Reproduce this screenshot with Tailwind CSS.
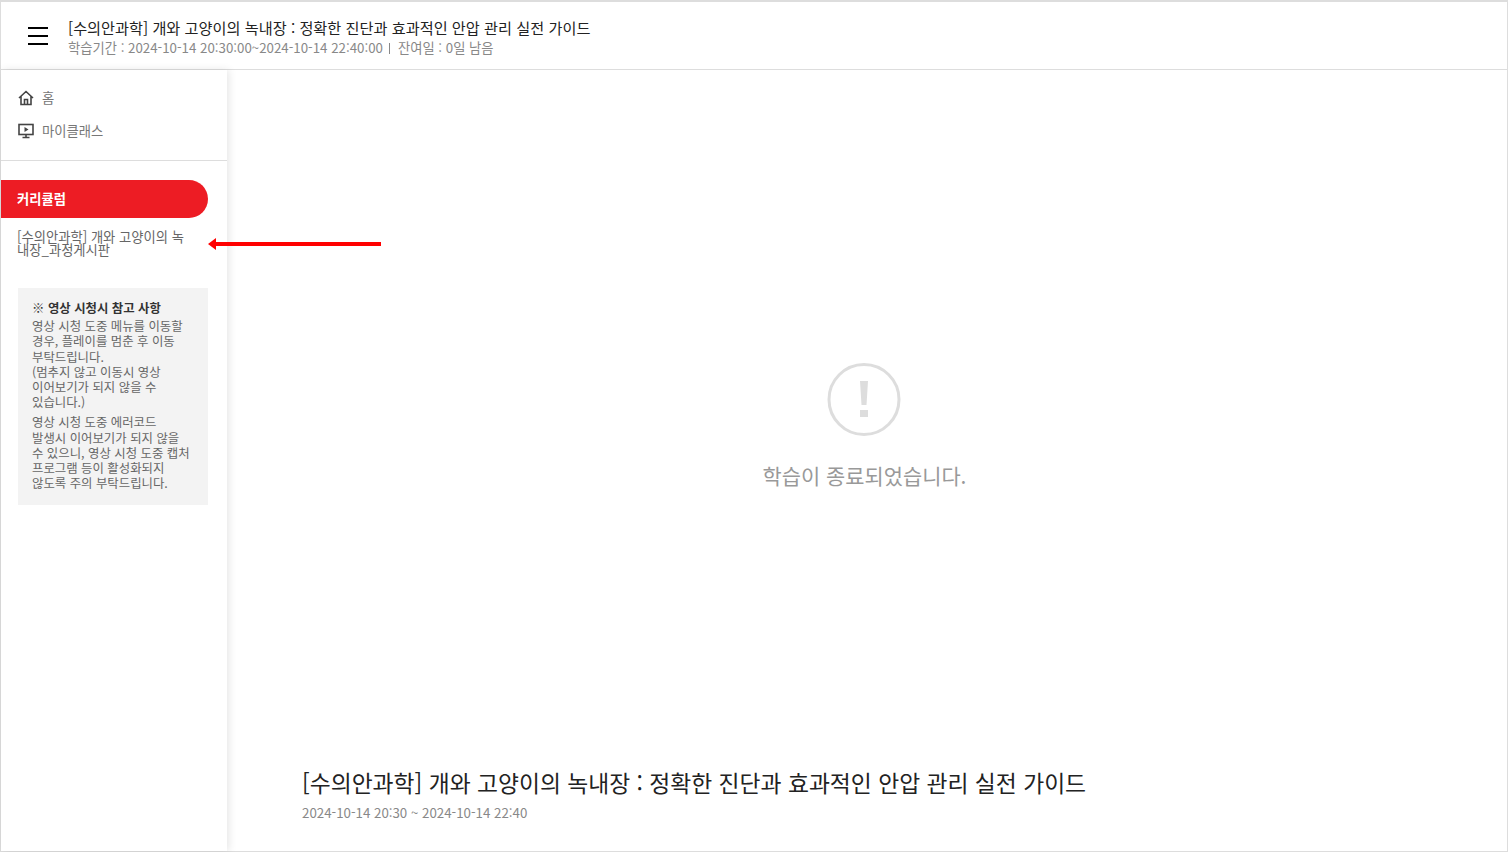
<!DOCTYPE html>
<html lang="ko">

<head>
  <meta charset="UTF-8">
  <title>수의안과학</title>
  <script src="https://cdn.jsdelivr.net/npm/@tailwindcss/browser@4"></script>
</head>

<body class="h-[852px] w-[1508px] overflow-hidden bg-white font-['Noto_Sans_CJK_KR','Noto_Sans',sans-serif] text-[#333]">
  <div class="relative flex h-full flex-col border-x border-b border-t-2 border-[#ddd]">

    <!-- Header -->
    <header class="flex h-[68px] shrink-0 items-center border-b border-[#ddd] pl-[27px]">
      <button class="flex w-5 flex-col gap-[6px]">
        <span class="h-[2px] w-5 bg-black"></span>
        <span class="h-[2px] w-5 bg-black"></span>
        <span class="h-[2px] w-5 bg-black"></span>
      </button>
      <div class="ml-[20px] pt-[3px]">
        <h1 class="text-[15.2px] leading-[20px] text-[#222]">[수의안과학] 개와 고양이의 녹내장 : 정확한 진단과 효과적인 안압 관리 실전 가이드</h1>
        <p class="mt-[2px] flex items-center text-[13.3px] leading-[18px] text-[#888]">
          <span>학습기간 : 2024-10-14 20:30:00~2024-10-14 22:40:00</span>
          <span class="ml-[6px] mr-[8px] h-[11px] w-px bg-[#888]"></span>
          <span>잔여일 : 0일 남음</span>
        </p>
      </div>
    </header>

    <div class="flex min-h-0 flex-1">
      <!-- Sidebar -->
      <aside class="w-[226px] shrink-0 shadow-[2px_0_8px_rgba(0,0,0,0.1)]">
        <nav class="flex h-[91px] flex-col gap-[13px] border-b border-[#ddd] pl-[17px] pt-[18px] text-[13.3px] leading-[20px] text-[#777]">
          <a class="flex items-center gap-[8px]">
            <svg class="h-[16px] w-[16px]" viewBox="0 0 16 16" fill="none" stroke="#444" stroke-width="1.6"><path d="M1 8 8 1.500 15 8M3 6.500V14.500H13V6.500M6.500 14.500V9.500H9.500V14.500"/></svg>
            <span>홈</span>
          </a>
          <a class="flex items-center gap-[8px]">
            <svg class="h-[16px] w-[16px]" viewBox="0 0 16 16" fill="none" stroke="#444" stroke-width="1.6"><rect x="1" y="1.500" width="14" height="10"/><path d="M8 11.500V14.500M4.500 14.500H11.500"/><path d="M6.500 4 10.500 6.500 6.500 9Z" fill="#444" stroke="none"/></svg>
            <span>마이클래스</span>
          </a>
        </nav>

        <div class="mt-[19px] flex h-[38px] w-[207px] items-center rounded-r-full bg-[#ed1c24] pb-[1px] pl-[16px] text-[13.3px] font-bold text-white">커리큘럼</div>

        <p class="ml-[16px] mt-[12px] w-[172px] text-[13.3px] leading-[13px] text-[#666]">[수의안과학] 개와 고양이의 녹내장_과정게시판</p>

        <div class="ml-[17px] mt-[32px] w-[190px] break-keep bg-[#f3f3f3] pb-[14px] pl-[14px] pr-[16px] pt-[13px] text-[12.4px] leading-[15.2px] text-[#666]">
          <p class="mb-[3px] text-[#333]">※ <b>영상 시청시 참고 사항</b></p>
          <p>영상 시청 도중 메뉴를 이동할 경우, 플레이를 멈춘 후 이동 부탁드립니다.<br>(멈추지 않고 이동시 영상 이어보기가 되지 않을 수 있습니다.)</p>
          <p class="mt-[5px]">영상 시청 도중 에러코드 발생시 이어보기가 되지 않을 수 있으니, 영상 시청 도중 캡처 프로그램 등이 활성화되지 않도록 주의 부탁드립니다.</p>
        </div>
      </aside>

      <!-- Main -->
      <main class="flex min-w-0 flex-1 flex-col">
        <div class="flex flex-1 flex-col items-center pr-[5px] pt-[293px]">
          <svg class="mr-[1px] h-[74px] w-[74px]" viewBox="0 0 74 74" fill="none">
            <circle cx="37" cy="36.500" r="35" stroke="#ddd" stroke-width="3"/>
            <path d="M33 18H41L39.500 42H34.500Z" fill="#ddd"/>
            <rect x="33" y="47" width="8" height="7" fill="#ddd"/>
          </svg>
          <p class="mt-[23px] text-[20.9px] leading-[30px] text-[#999]">학습이 종료되었습니다.</p>
        </div>
        <div class="h-[86px] shrink-0 pl-[75px]">
          <h2 class="mt-[1px] text-[22.8px] leading-[34px] text-[#222]">[수의안과학] 개와 고양이의 녹내장 : 정확한 진단과 효과적인 안압 관리 실전 가이드</h2>
          <p class="mt-[3px] text-[13.3px] leading-[20px] text-[#888]">2024-10-14 20:30 ~ 2024-10-14 22:40</p>
        </div>
      </main>
    </div>

    <!-- Red annotation arrow -->
    <svg class="absolute left-[207px] top-[235px] h-[14px] w-[174px]" viewBox="0 0 174 14">
      <path d="M0 7 8 1V5H173V9H8V13Z" fill="#ff0000"/>
    </svg>
  </div>
</body>

</html>
